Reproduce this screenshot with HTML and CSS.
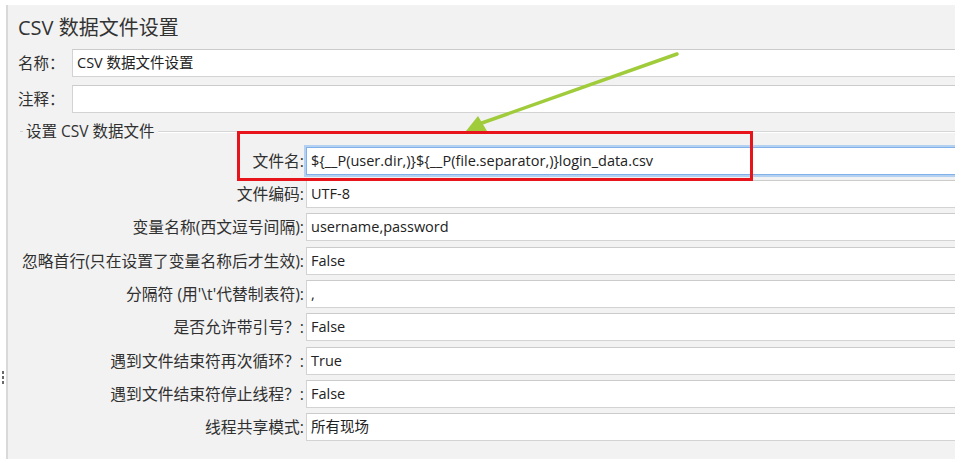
FILE: index.html
```html
<!DOCTYPE html>
<html lang="zh-CN">
<head>
<meta charset="utf-8">
<title>CSV 数据文件设置</title>
<link rel="stylesheet" href="styles.css">
</head>
<body>
<div class="frame">
  <div class="grip"><span></span><span></span><span></span></div>
  <div class="panel">
    <h1 class="title">CSV 数据文件设置</h1>
    <div class="toprow"><label>名称：</label><div class="field">CSV 数据文件设置</div></div>
    <div class="toprow second"><label>注释：</label><div class="field"></div></div>
    <div class="group">
      <div class="legend"><span class="tick"></span><span class="legend-text">设置 CSV 数据文件</span><span class="rule"></span></div>
      <div class="rows">
        <label>文件名:</label><div class="field focused">${__P(user.dir,)}${__P(file.separator,)}login_data.csv</div>
        <label>文件编码:</label><div class="field">UTF-8</div>
        <label>变量名称(西文逗号间隔):</label><div class="field">username,password</div>
        <label>忽略首行(只在设置了变量名称后才生效):</label><div class="field">False</div>
        <label>分隔符 (用'\t'代替制表符):</label><div class="field">,</div>
        <label>是否允许带引号？:</label><div class="field">False</div>
        <label>遇到文件结束符再次循环？:</label><div class="field">True</div>
        <label>遇到文件结束符停止线程？:</label><div class="field">False</div>
        <label>线程共享模式:</label><div class="field">所有现场</div>
      </div>
    </div>
    <div class="highlight"></div>
  </div>
</div>
<svg class="arrow" width="965" height="463" viewBox="0 0 965 463" xmlns="http://www.w3.org/2000/svg">
  <line x1="677" y1="54" x2="479" y2="124" stroke="#a0cc3c" stroke-width="3.5" stroke-linecap="round"/>
  <polygon points="466,131 478,116 487,131" fill="#a0cc3c"/>
</svg>
</body>
</html>
```

FILE: styles.css
```css
html, body {
  margin: 0;
  padding: 0;
  background: #ffffff;
}
body {
  width: 965px;
  height: 463px;
  overflow: hidden;
  position: relative;
  font-family: "Open Sans", "Noto Sans CJK SC", sans-serif;
  color: #303030;
}
.frame {
  display: flex;
  margin-top: 5px;
  width: 955px;
  height: 454px;
}
.grip {
  flex: 0 0 6px;
  display: flex;
  flex-direction: column;
  align-items: center;
  gap: 2px;
  padding-top: 366px;
  box-sizing: border-box;
}
.grip span {
  width: 2px;
  height: 3px;
  background: #6a6a6a;
}
.panel {
  position: relative;
  flex: 1;
  background: #f2f2f2;
  border-left: 2px solid #d9d9d9;
  padding-left: 10px;
  overflow: hidden;
}
.title {
  margin: 9px 0 0;
  font-size: 20px;
  font-weight: normal;
  line-height: 28px;
  color: #333;
}
.toprow {
  display: flex;
  height: 28px;
  margin-top: 7px;
}
.toprow.second {
  margin-top: 8px;
}
.toprow label {
  flex: 0 0 54px;
  font-size: 15.5px;
  line-height: 28px;
}
.field {
  flex: 1;
  margin-right: -30px;
  box-sizing: border-box;
  height: 28px;
  background: #fff;
  border: 1px solid #d3d3d3;
  border-top-color: #cbcbcb;
  padding: 0 4px;
  font-size: 14.5px;
  line-height: 26px;
  white-space: nowrap;
  color: #222;
}
.group {
  margin-top: 9px;
}
.legend {
  display: flex;
  align-items: center;
  height: 18px;
}
.tick {
  width: 3px;
  height: 1px;
  margin-left: 2px;
  background: #d0d0d0;
}
.legend-text {
  padding: 0 3px;
  font-size: 15.5px;
  line-height: 18px;
}
.rule {
  flex: 1;
  height: 1px;
  background: #d6d6d6;
  box-shadow: 0 1px 0 #ffffff;
}
.rows {
  margin-top: 6.5px;
  display: grid;
  grid-template-columns: 286px 1fr;
  column-gap: 2px;
  row-gap: 5.36px;
  grid-auto-rows: 28px;
}
.rows label {
  text-align: right;
  font-size: 15.8px;
  line-height: 28px;
  white-space: nowrap;
}
.rows .field {
  margin-right: -30px;
}
.field.focused {
  border-color: #82b0e8;
  box-shadow: 0 0 0 2px #b4d1f2;
}
.highlight {
  position: absolute;
  left: 229px;
  top: 126px;
  width: 516px;
  height: 50px;
  box-sizing: border-box;
  border: 3px solid #e8141c;
}
.arrow {
  position: absolute;
  left: 0;
  top: 0;
  pointer-events: none;
}
```
